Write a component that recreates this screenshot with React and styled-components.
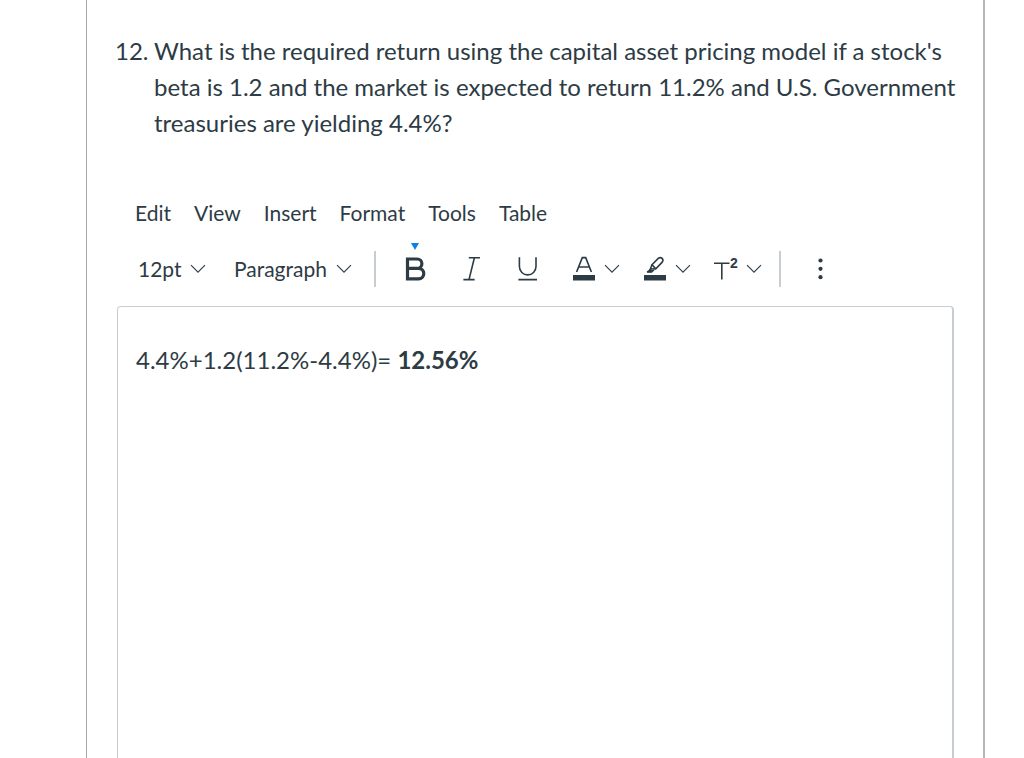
import React from "react";
import styled, { createGlobalStyle } from "styled-components";

const ink = "#2d3b45";
const line = "#c7cdd1";

const menus = ["Edit", "View", "Insert", "Format", "Tools", "Table"];

const Chevron = () => (
  <ChevronIcon viewBox="0 0 16 10" aria-hidden="true">
    <path d="M1 1.2 L8 8.2 L15 1.2" />
  </ChevronIcon>
);

const BoldIcon = () => (
  <Icon viewBox="0 0 24 28" $stroke={3.2} aria-hidden="true">
    <path d="M4.5 4 H14.2 A4.7 4.7 0 0 1 14.2 13.4 H4.5 M14.2 13.4 H15.6 A5.2 5.2 0 0 1 15.6 23.8 H4.5 M4.5 2.4 V25.4" />
  </Icon>
);

const ItalicIcon = () => (
  <Icon viewBox="0 0 24 28" $stroke={1.6} aria-hidden="true">
    <path d="M9.8 2.8 H21 M4.4 24.6 H15.6 M15.4 2.8 L10 24.6" />
  </Icon>
);

const UnderlineIcon = () => (
  <Icon viewBox="0 0 24 28" $stroke={1.6} aria-hidden="true">
    <path d="M4.4 2.2 V11.6 A8.3 8.3 0 0 0 21 11.6 V2.2 M3.4 24.6 H22" />
  </Icon>
);

const TextColorIcon = () => (
  <Icon viewBox="0 0 24 28" $stroke={1.6} aria-hidden="true">
    <path d="M4.6 17 L10.3 2.6 H13.7 L19.4 17 M6.5 12 H17.5" />
    <rect x="1" y="20" width="22" height="5.5" />
  </Icon>
);

const HighlightIcon = () => (
  <Icon viewBox="0 0 24 28" $stroke={1.6} aria-hidden="true">
    <path d="M9 9.8 L15.2 3.4 Q17.4 1.8 19.2 3.4 Q20.8 5.2 19 7.4 L12.8 13.8 Z" />
    <path d="M9 9.8 L7.4 14 L12.8 13.8 M7.4 14 Q6.6 16.4 4 17 H8.6 L11 14.6" />
    <path d="M7.2 13.6 L9.6 15.6 L8.4 17.2 H4.4 Z" fill={ink} stroke="none" />
    <rect x="1" y="20" width="22" height="5.5" />
  </Icon>
);

const SuperscriptIcon = () => (
  <Icon viewBox="0 0 24 28" $stroke={1.6} aria-hidden="true">
    <path d="M0 8.2 H15.5 M7.8 8.2 V24.5" />
    <text x="16" y="13">
      2
    </text>
  </Icon>
);

const MoreIcon = () => (
  <Icon viewBox="0 0 24 28" $stroke={0} aria-hidden="true">
    <circle cx="12.5" cy="5.5" r="2.1" />
    <circle cx="12.5" cy="13.8" r="2.1" />
    <circle cx="12.5" cy="22.2" r="2.1" />
  </Icon>
);

const App = () => {
  return (
    <>
      <GlobalStyle />
      <Page>
        <Frame>
          {/* Question */}
          <Question>
            <span>12.</span>
            <p id="question">
              What is the required return using the capital asset pricing model
              if a stock's beta is 1.2 and the market is expected to return
              11.2% and U.S. Government treasuries are yielding 4.4%?
            </p>
          </Question>
          {/* Menu bar */}
          <MenuBar aria-label="Editor menu">
            {menus.map((menu) => (
              <MenuButton type="button" key={menu}>
                {menu}
              </MenuButton>
            ))}
          </MenuBar>
          {/* Toolbar */}
          <Toolbar role="toolbar" aria-label="Formatting">
            <Picker $width="96px">
              <select aria-label="Font size" defaultValue="12pt">
                <option>10pt</option>
                <option>12pt</option>
                <option>14pt</option>
              </select>
              <Chevron />
            </Picker>
            <Picker $width="146px">
              <select aria-label="Block style" defaultValue="Paragraph">
                <option>Heading 2</option>
                <option>Heading 3</option>
                <option>Paragraph</option>
              </select>
              <Chevron />
            </Picker>
            <Divider />
            <ToolButton type="button" aria-label="Bold">
              <BoldIcon />
              <Marker />
            </ToolButton>
            <ToolButton type="button" aria-label="Italic">
              <ItalicIcon />
            </ToolButton>
            <ToolButton type="button" aria-label="Underline">
              <UnderlineIcon />
            </ToolButton>
            <SplitGroup>
              <SplitButton type="button" aria-label="Text color">
                <TextColorIcon />
                <Chevron />
              </SplitButton>
              <SplitButton type="button" aria-label="Highlight color">
                <HighlightIcon />
                <Chevron />
              </SplitButton>
              <SplitButton type="button" aria-label="Superscript">
                <SuperscriptIcon />
                <Chevron />
              </SplitButton>
            </SplitGroup>
            <Divider />
            <ToolButton type="button" aria-label="More">
              <MoreIcon />
            </ToolButton>
          </Toolbar>
          {/* Answer */}
          <Editor
            role="textbox"
            aria-multiline="true"
            aria-labelledby="question"
            contentEditable
            suppressContentEditableWarning
            spellCheck={false}
          >
            <p>
              4.4%+1.2(11.2%-4.4%)= <strong>12.56%</strong>
            </p>
          </Editor>
        </Frame>
      </Page>
    </>
  );
};

const GlobalStyle = createGlobalStyle`
  * {
    box-sizing: border-box;
  }
  body {
    margin: 0;
    background: #fff;
    color: ${ink};
    font-family: Lato, "Liberation Sans", sans-serif;
    font-size: 24px;
    line-height: 36px;
  }
  p {
    margin: 0;
  }
  button, select {
    margin: 0;
    padding: 0;
    border: 0;
    background: transparent;
    color: inherit;
    font: inherit;
    cursor: pointer;
  }
`;

const Page = styled.main`
  height: 100vh;
  padding: 0 39px 0 86px;
  overflow: hidden;
`;

const Frame = styled.section`
  min-height: 100%;
  padding: 33px 29px 0 30px;
  border-left: 1px solid #a5a8aa;
  border-right: 2px solid #b4b7b9;
`;

const Question = styled.div`
  display: grid;
  grid-template-columns: 39px 1fr;
  margin: 0 -12px 0 -2px;
`;

const MenuBar = styled.nav`
  display: flex;
  gap: 23px;
  margin-top: 52px;
  padding-left: 18px;
  font-size: 21px;
`;

const MenuButton = styled.button`
  line-height: 40px;
`;

const Toolbar = styled.div`
  display: flex;
  align-items: center;
  height: 56px;
  margin-top: 8px;
  padding-left: 9px;
  font-size: 21px;
`;

const Picker = styled.div`
  display: grid;
  grid-template-columns: 1fr;
  align-items: center;
  width: ${(props) => props.$width};
  select {
    grid-area: 1 / 1;
    height: 40px;
    padding-left: 12px;
    appearance: none;
  }
  svg {
    grid-area: 1 / 1;
    justify-self: end;
    margin-right: 16px;
    pointer-events: none;
  }
`;

const Divider = styled.span`
  width: 2px;
  height: 36px;
  margin: 0 11px 0 6px;
  background: ${line};
`;

const ToolButton = styled.button`
  position: relative;
  display: flex;
  align-items: center;
  justify-content: center;
  width: 56px;
  height: 56px;
`;

const Marker = styled.span`
  position: absolute;
  top: 2px;
  left: 24px;
  border: 4px solid transparent;
  border-top: 7px solid #0f7fe8;
  border-bottom: 0;
`;

const SplitGroup = styled.div`
  display: flex;
  padding-left: 5px;
`;

const SplitButton = styled.button`
  display: flex;
  align-items: center;
  gap: 8px;
  width: 71px;
  height: 40px;
  padding-left: 12px;
`;

const Icon = styled.svg`
  width: 24px;
  height: 28px;
  fill: none;
  stroke: ${ink};
  stroke-width: ${(props) => props.$stroke};
  rect,
  circle,
  text {
    fill: ${ink};
    stroke: none;
  }
  text {
    font: bold 14px "Liberation Sans", sans-serif;
  }
`;

const ChevronIcon = styled.svg`
  width: 16px;
  height: 10px;
  fill: none;
  stroke: ${ink};
  stroke-width: 1.1;
`;

const Editor = styled.div`
  min-height: 500px;
  margin-top: 9px;
  padding: 35px 18px;
  border: 1px solid ${line};
  border-right-width: 2px;
  border-radius: 4px;
  outline: none;
`;

export default App;
